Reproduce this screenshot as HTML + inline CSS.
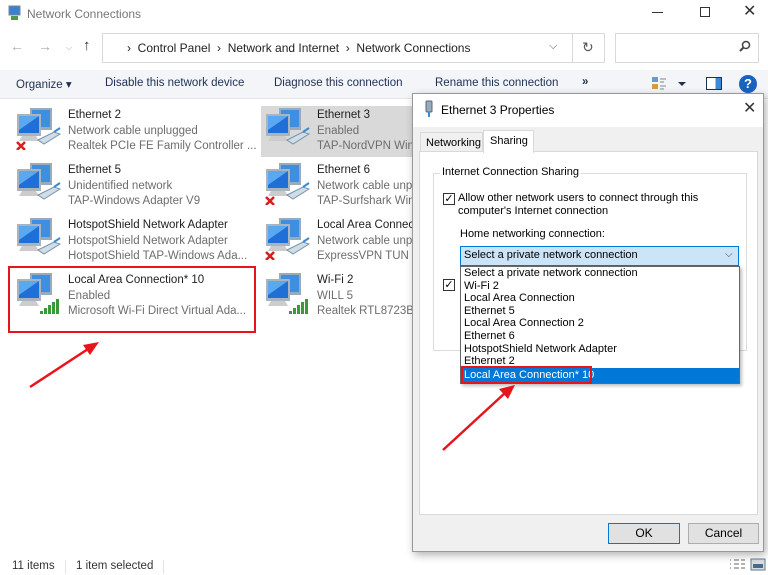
<!DOCTYPE html>
<html><head><meta charset="utf-8"><style>
*{margin:0;padding:0;box-sizing:border-box}
body{width:768px;height:575px;position:relative;overflow:hidden;background:#fff;font-family:"Liberation Sans",sans-serif;font-size:11.5px;color:#000}
.a{position:absolute;white-space:nowrap}
.g{color:#6d6d6d}
.ic{position:absolute;width:48px;height:44px}
.nm{font-size:11.5px;color:#1e1e1e}
.sub{font-size:11.5px;color:#6d6d6d}
.li{position:absolute;left:3px;font-size:11px;line-height:12.6px}
</style></head><body>
<svg width="0" height="0" style="position:absolute"><defs>
<g id="mon">
<rect x="16" y="2" width="22" height="22" fill="#9ab" /><rect x="18" y="4" width="18" height="17" fill="#3f8fe0"/>
<rect x="3" y="8" width="24" height="22" fill="#aab4bf"/><rect x="5" y="10" width="20" height="17" fill="#1f6fd6"/>
<path d="M5 10 L25 10 L5 24Z" fill="#5aa8f0"/>
<path d="M8 30 L22 30 L25 35 L5 35Z" fill="#ccc"/>
</g>
<g id="cab"><path d="M24 34 L40 26 L46 28 L30 38Z" fill="#cfdde8" stroke="#7a93a8" stroke-width="1"/><path d="M40 26 L46 22" stroke="#3a8ad8" stroke-width="2"/></g>
<g id="x"><path d="M3 36 L11 44 M11 36 L3 44" stroke="#d81e1e" stroke-width="2.5"/></g>
<g id="wifi"><rect x="26" y="40" width="3" height="3" fill="#3a9a3a"/><rect x="30" y="37" width="3" height="6" fill="#3a9a3a"/><rect x="34" y="34" width="3" height="9" fill="#3a9a3a"/><rect x="38" y="31" width="3" height="12" fill="#3a9a3a"/><rect x="42" y="28" width="3" height="15" fill="#3a9a3a"/></g>
</defs></svg>

<!-- title bar -->
<svg class="a" style="left:8px;top:5px" width="14" height="16"><rect x="1" y="1" width="11" height="9" fill="#3a7fd0" stroke="#789"/><rect x="3" y="11" width="7" height="4" fill="#4a9a4a"/></svg>
<div class="a g" style="left:27px;top:7px;font-size:12px;color:#777">Network Connections</div>
<div class="a" style="left:652px;top:12px;width:11px;height:1px;background:#333"></div>
<div class="a" style="left:700px;top:7px;width:10px;height:10px;border:1px solid #333"></div>
<div class="a" style="left:743px;top:1px;font-size:16px;color:#333">✕</div>

<!-- nav -->
<div class="a" style="left:10px;top:38px;color:#aaa;font-size:14px">←</div>
<div class="a" style="left:38px;top:38px;color:#aaa;font-size:14px">→</div>
<div class="a" style="left:66px;top:43px;color:#aaa;font-size:8px">⌵</div>
<div class="a" style="left:83px;top:37px;color:#333;font-size:15px">↑</div>
<div class="a" style="left:102px;top:33px;width:503px;height:30px;border:1px solid #d9d9d9"></div>
<div class="a" style="left:572px;top:33px;width:1px;height:30px;background:#d9d9d9"></div>
<div class="a" style="left:127px;top:41px;font-size:12px;color:#222">›&nbsp;&nbsp;Control Panel&nbsp;&nbsp;›&nbsp;&nbsp;Network and Internet&nbsp;&nbsp;›&nbsp;&nbsp;Network Connections</div>
<div class="a" style="left:549px;top:40px;color:#555;font-size:11px">⌵</div>
<div class="a" style="left:582px;top:39px;color:#555;font-size:14px">↻</div>
<div class="a" style="left:615px;top:33px;width:144px;height:30px;border:1px solid #d9d9d9"></div>
<svg class="a" style="left:738px;top:40px" width="14" height="14"><circle cx="8" cy="5" r="3.5" fill="none" stroke="#444" stroke-width="1.5"/><path d="M5.5 7.5 L2 11" stroke="#444" stroke-width="2"/></svg>

<!-- toolbar -->
<div class="a" style="left:0;top:70px;width:768px;height:29px;background:#f3f5f9;border-bottom:1px solid #e5e5e5"></div>
<div class="a" style="left:16px;top:77px;color:#1e3050">Organize ▾</div>
<div class="a" style="left:105px;top:77px;color:#1e3050">Disable this network device</div>
<div class="a" style="left:274px;top:77px;color:#1e3050">Diagnose this connection</div>
<div class="a" style="left:435px;top:77px;color:#1e3050">Rename this connection</div>
<div class="a" style="left:582px;top:76px;color:#1e3050;font-weight:bold">»</div>
<svg class="a" style="left:652px;top:77px" width="40" height="14"><rect x="0" y="0" width="6" height="5" fill="#6a9ad0"/><rect x="0" y="7" width="6" height="5" fill="#d0a040"/><path d="M8 2h6M8 5h4M8 9h6M8 12h4" stroke="#888"/><path d="M26 5 l4 4 l4-4z" fill="#1e3050"/></svg>
<div class="a" style="left:706px;top:77px;width:16px;height:13px;border:1px solid #1e3050;background:linear-gradient(90deg,#fff 60%,#3a8ad8 60%)"></div>
<div class="a" style="left:739px;top:75px;width:18px;height:18px;border-radius:50%;background:#1a62c0;color:#fff;font-weight:bold;text-align:center;line-height:18px;font-size:13px">?</div>

<!-- items -->
<div class="a" style="left:261px;top:106px;width:152px;height:51px;background:#d9d9d9"></div>

<svg class="ic" style="left:14px;top:106px" viewBox="0 0 48 44"><use href="#mon"/><use href="#cab"/><use href="#x"/></svg>
<div class="a nm" style="left:68px;top:109px">Ethernet 2</div>
<div class="a sub" style="left:68px;top:125px">Network cable unplugged</div>
<div class="a sub" style="left:68px;top:140px">Realtek PCIe FE Family Controller ...</div>

<svg class="ic" style="left:263px;top:106px" viewBox="0 0 48 44"><use href="#mon"/><use href="#cab"/></svg>
<div class="a nm" style="left:317px;top:109px">Ethernet 3</div>
<div class="a sub" style="left:317px;top:125px">Enabled</div>
<div class="a sub" style="left:317px;top:140px">TAP-NordVPN Win</div>

<svg class="ic" style="left:14px;top:161px" viewBox="0 0 48 44"><use href="#mon"/><use href="#cab"/></svg>
<div class="a nm" style="left:68px;top:164px">Ethernet 5</div>
<div class="a sub" style="left:68px;top:180px">Unidentified network</div>
<div class="a sub" style="left:68px;top:195px">TAP-Windows Adapter V9</div>

<svg class="ic" style="left:263px;top:161px" viewBox="0 0 48 44"><use href="#mon"/><use href="#cab"/><use href="#x"/></svg>
<div class="a nm" style="left:317px;top:164px">Ethernet 6</div>
<div class="a sub" style="left:317px;top:180px">Network cable unp</div>
<div class="a sub" style="left:317px;top:195px">TAP-Surfshark Win</div>

<svg class="ic" style="left:14px;top:216px" viewBox="0 0 48 44"><use href="#mon"/><use href="#cab"/></svg>
<div class="a nm" style="left:68px;top:219px">HotspotShield Network Adapter</div>
<div class="a sub" style="left:68px;top:235px">HotspotShield Network Adapter</div>
<div class="a sub" style="left:68px;top:250px">HotspotShield TAP-Windows Ada...</div>

<svg class="ic" style="left:263px;top:216px" viewBox="0 0 48 44"><use href="#mon"/><use href="#cab"/><use href="#x"/></svg>
<div class="a nm" style="left:317px;top:219px">Local Area Connec</div>
<div class="a sub" style="left:317px;top:235px">Network cable unp</div>
<div class="a sub" style="left:317px;top:250px">ExpressVPN TUN D</div>

<svg class="ic" style="left:14px;top:271px" viewBox="0 0 48 44"><use href="#mon"/><use href="#wifi"/></svg>
<div class="a nm" style="left:68px;top:274px">Local Area Connection* 10</div>
<div class="a sub" style="left:68px;top:290px">Enabled</div>
<div class="a sub" style="left:68px;top:305px">Microsoft Wi-Fi Direct Virtual Ada...</div>

<svg class="ic" style="left:263px;top:271px" viewBox="0 0 48 44"><use href="#mon"/><use href="#wifi"/></svg>
<div class="a nm" style="left:317px;top:274px">Wi-Fi 2</div>
<div class="a sub" style="left:317px;top:290px">WILL 5</div>
<div class="a sub" style="left:317px;top:305px">Realtek RTL8723BE</div>

<div class="a" style="left:8px;top:266px;width:248px;height:67px;border:2px solid #e8141c"></div>

<!-- status -->
<div class="a" style="left:12px;top:560px;color:#333">11 items</div>
<div class="a" style="left:65px;top:560px;width:1px;height:14px;background:#e5e5e5"></div>
<div class="a" style="left:76px;top:560px;color:#333">1 item selected</div>
<div class="a" style="left:163px;top:560px;width:1px;height:14px;background:#e5e5e5"></div>
<svg class="a" style="left:727px;top:558px" width="40" height="14"><path d="M3 2h1M3 6h1M3 10h1M7 2h5M7 6h5M7 10h5M14 2h4M14 6h4M14 10h4" stroke="#666"/><rect x="24" y="1" width="14" height="11" fill="#ddd" stroke="#5a7a9a"/><rect x="26" y="6" width="10" height="4" fill="#4a6a8a"/></svg>

<!-- dialog -->
<div class="a" style="left:412px;top:93px;width:352px;height:459px;background:#f0f0f0;border:1px solid #999;box-shadow:2px 3px 8px rgba(0,0,0,.3)"></div>
<div class="a" style="left:413px;top:94px;width:350px;height:33px;background:#fff"></div>
<svg class="a" style="left:424px;top:100px" width="10" height="18"><rect x="2" y="1" width="6" height="11" rx="1" fill="#9ab" stroke="#567"/><rect x="4" y="12" width="2" height="5" fill="#3a8ad8"/></svg>
<div class="a" style="left:441px;top:103px;font-size:12px">Ethernet 3 Properties</div>
<div class="a" style="left:743px;top:98px;font-size:16px;color:#333">✕</div>
<div class="a" style="left:420px;top:132px;width:63px;height:20px;border:1px solid #d9d9d9;background:#f0f0f0"></div>
<div class="a" style="left:426px;top:137px;font-size:11px">Networking</div>
<div class="a" style="left:419px;top:151px;width:339px;height:364px;background:#fff;border:1px solid #d9d9d9"></div>
<div class="a" style="left:483px;top:130px;width:51px;height:23px;background:#fff;border:1px solid #d9d9d9;border-bottom:none"></div>
<div class="a" style="left:490px;top:135px;font-size:11px">Sharing</div>

<div class="a" style="left:433px;top:173px;width:314px;height:178px;border:1px solid #dcdcdc"></div>
<div class="a" style="left:440px;top:166px;background:#fff;padding:0 2px;font-size:11px">Internet Connection Sharing</div>
<div class="a" style="left:443px;top:193px;width:12px;height:12px;border:1px solid #333;font-size:11px;line-height:10px;text-align:center">✓</div>
<div class="a" style="left:458px;top:192px;font-size:11px;line-height:13px">Allow other network users to connect through this<br>computer's Internet connection</div>
<div class="a" style="left:460px;top:228px;font-size:11px">Home networking connection:</div>
<div class="a" style="left:443px;top:279px;width:12px;height:12px;border:1px solid #333;font-size:11px;line-height:10px;text-align:center">✓</div>
<div class="a" style="left:460px;top:246px;width:279px;height:20px;background:#cce4f7;border:1px solid #0078d7"></div>
<div class="a" style="left:464px;top:249px;font-size:11px">Select a private network connection</div>
<div class="a" style="left:725px;top:249px;font-size:10px;color:#444">⌵</div>
<div class="a" style="left:460px;top:266px;width:280px;height:118px;background:#fff;border:1px solid #666;box-shadow:2px 2px 3px rgba(0,0,0,.25)">
<div class="li" style="top:0">Select a private network connection</div>
<div class="li" style="top:12.6px">Wi-Fi 2</div>
<div class="li" style="top:25.2px">Local Area Connection</div>
<div class="li" style="top:37.8px">Ethernet 5</div>
<div class="li" style="top:50.4px">Local Area Connection 2</div>
<div class="li" style="top:63px">Ethernet 6</div>
<div class="li" style="top:75.6px">HotspotShield Network Adapter</div>
<div class="li" style="top:88.2px">Ethernet 2</div>
<div class="a" style="left:0;top:101px;width:278px;height:15px;background:#0078d7"></div>
<div class="li" style="top:102px;color:#fff">Local Area Connection* 10</div>
</div>
<div class="a" style="left:461px;top:366px;width:131px;height:18px;border:2px solid #e8141c"></div>

<div class="a" style="left:608px;top:523px;width:72px;height:21px;background:#e1e1e1;border:1px solid #0078d7;text-align:center;line-height:19px;font-size:12px">OK</div>
<div class="a" style="left:688px;top:523px;width:71px;height:21px;background:#e1e1e1;border:1px solid #adadad;text-align:center;line-height:19px;font-size:12px">Cancel</div>

<!-- arrows -->
<svg class="a" style="left:0;top:0" width="768" height="575">
<path d="M30 387 L88 349" stroke="#e8141c" stroke-width="2.5"/><path d="M99 342 L83 345 L90 355Z" fill="#e8141c"/>
<path d="M443 450 L505 393" stroke="#e8141c" stroke-width="2.5"/><path d="M515 385 L499 389 L508 399Z" fill="#e8141c"/>
</svg>
</body></html>
